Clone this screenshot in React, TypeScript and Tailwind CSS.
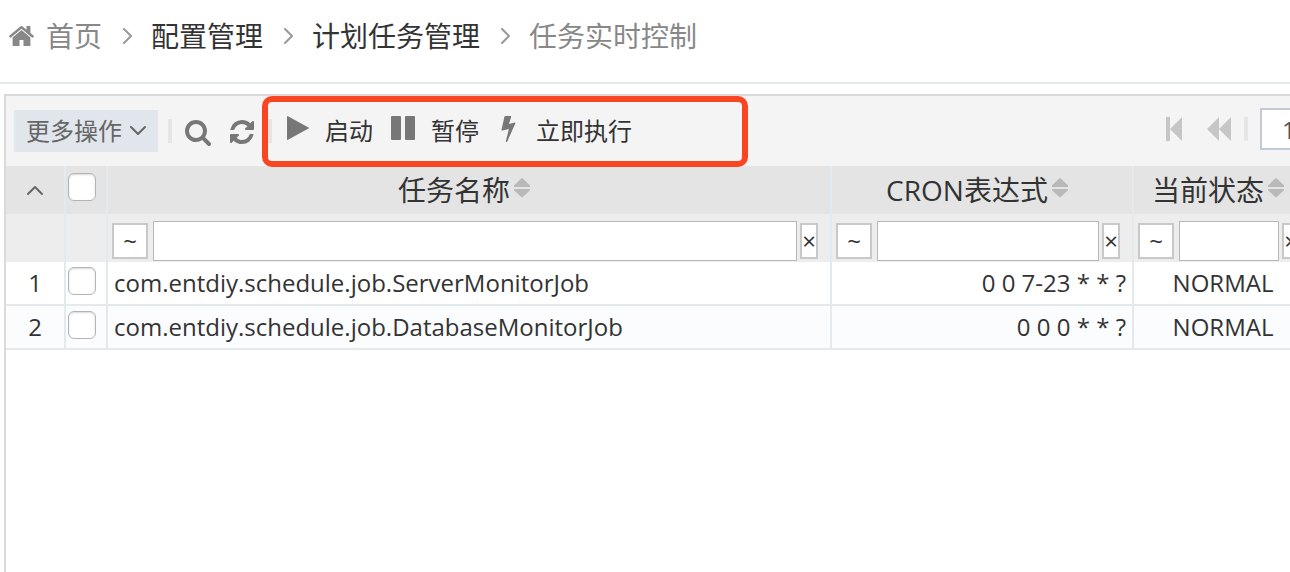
import { Fragment, type ReactNode } from "react";

type IconProps = { className?: string };

const HomeIcon = ({ className }: IconProps) => (
  <svg viewBox="24 253 1616 1283" fill="currentColor" className={className} aria-hidden="true">
    <path d="M1408 992v480q0 26-19 45t-45 19h-384v-384h-256v384h-384q-26 0-45-19t-19-45v-480q0-1 .5-3t.5-3l575-474 575 474q1 2 1 6zm223-69l-62 74q-8 9-21 11h-3q-13 0-21-7l-692-577-692 577q-12 8-24 7-13-2-21-11l-62-74q-8-10-7-23.5t11-21.5l719-599q32-26 76-26t76 26l244 204v-195q0-14 9-23t23-9h192q14 0 23 9t9 23v408l219 182q10 8 11 21.5t-7 23.5z" />
  </svg>
);

const SearchIcon = ({ className }: IconProps) => (
  <svg viewBox="0 128 1664 1664" fill="currentColor" className={className} aria-hidden="true">
    <path d="M1152 832q0-185-131.5-316.5t-316.5-131.5-316.5 131.5-131.5 316.5 131.5 316.5 316.5 131.5 316.5-131.5 131.5-316.5zm512 832q0 52-38 90t-90 38q-54 0-90-38l-343-342q-179 124-399 124-143 0-273.5-55.5t-225-150-150-225-55.5-273.5 55.5-273.5 150-225 225-150 273.5-55.5 273.5 55.5 225 150 150 225 55.5 273.5q0 220-124 399l343 343q37 37 37 90z" />
  </svg>
);

const RefreshIcon = ({ className }: IconProps) => (
  <svg viewBox="0 128 1536 1536" fill="currentColor" className={className} aria-hidden="true">
    <path d="M1511 1056q0 5-1 7-64 268-268 434.5t-478 166.5q-146 0-282.5-55t-243.5-157l-129 129q-19 19-45 19t-45-19-19-45v-448q0-26 19-45t45-19h448q26 0 45 19t19 45-19 45l-137 137q71 66 161 102t187 36q134 0 250-65t186-179q11-17 53-117 8-23 30-23h192q13 0 22.5 9.5t9.5 22.5zm25-800v448q0 26-19 45t-45 19h-448q-26 0-45-19t-19-45 19-45l138-138q-148-137-349-137-134 0-250 65t-186 179q-11 17-53 117-8 23-30 23h-199q-13 0-22.5-9.5t-9.5-22.5v-7q65-268 270-434.5t480-166.5q146 0 284 55.5t245 156.5l130-129q19-19 45-19t45 19 19 45z" />
  </svg>
);

const PlayIcon = ({ className }: IconProps) => (
  <svg viewBox="0 0 22 24" fill="currentColor" className={className} aria-hidden="true">
    <path d="M0 .8Q0-.3 1 .3L21.500 11.500q1 .5 0 1L1 23.700q-1 .6-1-.5z" />
  </svg>
);

const PauseIcon = ({ className }: IconProps) => (
  <svg viewBox="0 0 24 24" fill="currentColor" className={className} aria-hidden="true">
    <rect width="10" height="24" rx="1" />
    <rect x="14" width="10" height="24" rx="1" />
  </svg>
);

const BoltIcon = ({ className }: IconProps) => (
  <svg viewBox="0 0 14 26" fill="currentColor" className={className} aria-hidden="true">
    <path d="M3.600 0h5.600q.8 0 .5.800L7.400 8l5.800-1.400q1-.1.600.9L5.800 25.400q-.4.700-1 .5-.6-.3-.4-.9l3-12.100-6.500 1.600Q-.2 14.600 0 13.700L3 .5Q3.100 0 3.600 0z" />
  </svg>
);

const FirstIcon = ({ className }: IconProps) => (
  <svg viewBox="0 0 16 24" fill="currentColor" className={className} aria-hidden="true">
    <path d="M0 0h4v24H0zM16 0v24L4 12z" />
  </svg>
);

const PrevIcon = ({ className }: IconProps) => (
  <svg viewBox="0 0 24 24" fill="currentColor" className={className} aria-hidden="true">
    <path d="M12 0v24L0 12zM24 0v24L12 12z" />
  </svg>
);

const SortIcon = () => (
  <svg viewBox="0 0 16 20" className="mb-1 h-5 w-4 text-[#b9b9b9]" fill="currentColor" aria-hidden="true">
    <path d="M7.200.6q.8-.8 1.600 0L16 7.500V9H0V7.500zM0 11h16v1.200l-7.200 6.900q-.8.800-1.600 0L0 12.200z" />
  </svg>
);

const Chevron = ({ className, d, box }: { className: string; d: string; box: string }) => (
  <svg viewBox={box} className={className} fill="none" stroke="currentColor" strokeWidth="2" strokeLinecap="round" strokeLinejoin="round" aria-hidden="true">
    <path d={d} />
  </svg>
);

const crumbs = [
  { label: "首页", tone: "text-[#888]", home: true },
  { label: "配置管理", tone: "text-[#333]" },
  { label: "计划任务管理", tone: "text-[#333]" },
  { label: "任务实时控制", tone: "text-[#888]" },
];

const jobs = [
  { id: 1, name: "com.entdiy.schedule.job.ServerMonitorJob", cron: "0 0 7-23 * * ?", status: "NORMAL" },
  { id: 2, name: "com.entdiy.schedule.job.DatabaseMonitorJob", cron: "0 0 0 * * ?", status: "NORMAL" },
];

const columns = ["任务名称", "CRON表达式", "当前状态"];

const Separator = () => <span className="h-6 w-1 shrink-0 bg-[#e5e5e5]" />;

function Checkbox({ label }: { label: string }) {
  return (
    <input
      type="checkbox"
      aria-label={label}
      className="block size-7 appearance-none rounded-md border border-[#b4b4b4] bg-white shadow-[inset_0_1px_2px_rgba(0,0,0,0.15)] checked:bg-[#777]"
    />
  );
}

function ActionButton({ icon, gap, children }: { icon: ReactNode; gap: string; children: ReactNode }) {
  return (
    <button type="button" className={`flex shrink-0 items-center text-[#333] ${gap}`}>
      {icon}
      <span>{children}</span>
    </button>
  );
}

function Breadcrumb() {
  return (
    <nav aria-label="导航" className="border-b-2 border-[#e4e9ee] bg-white">
      <ol className="flex h-[82px] items-center gap-[18px] overflow-hidden pb-2.5 pl-[9px] text-[28px] leading-10 whitespace-nowrap">
        {crumbs.map((c, i) => (
          <Fragment key={c.label}>
            {i > 0 && (
              <li aria-hidden="true" className="text-[#999]">
                <Chevron className="h-4 w-[13px]" box="0 0 13 16" d="M4 1l7 7-7 7" />
              </li>
            )}
            <li>
              <a href="#" className={`flex items-center gap-3 ${c.tone}`}>
                {c.home && <HomeIcon className="h-5 w-[25px]" />}
                {c.label}
              </a>
            </li>
          </Fragment>
        ))}
      </ol>
    </nav>
  );
}

function Toolbar() {
  return (
    <div className="relative flex h-[70px] items-center justify-between bg-[#f4f4f4] pl-2 text-2xl leading-8 whitespace-nowrap">
      <div className="flex items-center">
        <button type="button" className="flex h-[42px] items-center gap-2 bg-[#e1e5ec] px-3 text-[#666]">
          更多操作
          <Chevron className="h-3 w-4" box="0 0 16 12" d="M1 2l7 7 7-7" />
        </button>
        <div className="ml-[10px] flex items-center text-[#777]">
          <Separator />
          <button type="button" aria-label="查询" className="ml-[13px] pt-1">
            <SearchIcon className="size-[26px]" />
          </button>
          <button type="button" aria-label="刷新" className="ml-[19px] pt-0.5">
            <RefreshIcon className="size-6" />
          </button>
        </div>
        <div className="ml-[14px] flex items-center">
          <Separator />
          <div className="ml-[15px] flex items-center gap-[18px]">
            <ActionButton gap="gap-4" icon={<PlayIcon className="mb-1.5 h-6 w-[22px] text-[#777]" />}>启动</ActionButton>
            <ActionButton gap="gap-4" icon={<PauseIcon className="mb-1.5 size-6 text-[#777]" />}>暂停</ActionButton>
            <span className="pl-1">
              <ActionButton gap="gap-5" icon={<BoltIcon className="mb-1 h-[26px] w-[15px] text-[#777]" />}>立即执行</ActionButton>
            </span>
          </div>
        </div>
      </div>
      <div className="flex items-center pb-1 text-[#c6c6c6]">
        <button type="button" aria-label="第一页">
          <FirstIcon className="h-6 w-4" />
        </button>
        <button type="button" aria-label="上一页" className="ml-[25px]">
          <PrevIcon className="size-6" />
        </button>
        <span className="mr-3 ml-[13px] flex">
          <Separator />
        </span>
        <div className="w-[30px] overflow-hidden">
          <input
            aria-label="页码"
            defaultValue="1"
            className="block h-[42px] w-16 rounded-none border-2 border-[#c2cad8] bg-white pl-5 text-2xl text-[#555]"
          />
        </div>
      </div>
      <div className="pointer-events-none absolute top-0 left-64 h-[71px] w-[486px] rounded-[10px] border-6 border-[#fa4522]" />
    </div>
  );
}

function Filter({ label }: { label: string }) {
  return (
    <div className="flex items-center pr-3 pl-1">
      <button type="button" aria-label={`${label} 匹配方式`} className="flex size-9 shrink-0 items-center justify-center border-2 border-[#c8c8c8] bg-white">
        ~
      </button>
      <input aria-label={`${label} 筛选`} className="ml-[5px] h-10 min-w-0 flex-1 rounded-none border border-[#b8b8b8] bg-white px-2" />
      <button
        type="button"
        aria-label={`${label} 清除`}
        className="ml-[3px] flex h-9 w-[18px] shrink-0 items-center justify-center border-2 border-[#c8c8c8] bg-white"
      >
        ×
      </button>
    </div>
  );
}

function JobTable() {
  const cell = "h-11 border-r-2 border-b-2 border-[#e4e9ee] p-0";
  return (
    <table className="w-full min-w-[1308px] table-fixed border-separate border-spacing-0 text-2xl leading-8 text-[#333]">
      <colgroup>
        <col className="w-[60px]" />
        <col className="w-[42px]" />
        <col />
        <col className="w-[302px]" />
        <col className="w-[180px]" />
      </colgroup>
      <thead>
        <tr className="bg-[#e4e4e4]">
          <th className="h-12 border-r-2 border-[#e4e9ee] p-0">
            <button type="button" aria-label="折叠" className="mx-auto block text-[#666]">
              <Chevron className="h-3 w-4" box="0 0 16 12" d="M1 10l7-7 7 7" />
            </button>
          </th>
          <th className="border-r-2 border-[#e4e9ee] p-0 pb-1.5 pl-0.5">
            <Checkbox label="全选" />
          </th>
          {columns.map((c) => (
            <th key={c} className="border-r-2 border-[#e4e9ee] p-0 pr-2.5 font-normal">
              <button type="button" className="mx-auto flex items-center gap-1 text-[28px] leading-10">
                {c}
                <SortIcon />
              </button>
            </th>
          ))}
        </tr>
        <tr className="bg-[#ededed]">
          <td className="h-12 border-r-2 border-[#e4e9ee] p-0" />
          <td className="border-r-2 border-[#e4e9ee] p-0" />
          {columns.map((c) => (
            <td key={c} className="border-r-2 border-[#e4e9ee] p-0 pt-1.5">
              <Filter label={c} />
            </td>
          ))}
        </tr>
      </thead>
      <tbody>
        {jobs.map((j) => (
          <tr key={j.id} className="bg-white even:bg-[#fbfcfe]">
            <td className={`${cell} text-center`}>{j.id}</td>
            <td className={`${cell} pb-1 pl-0.5`}>
              <Checkbox label={`选择 ${j.id}`} />
            </td>
            <td className={`${cell} pl-1.5`}>{j.name}</td>
            <td className={`${cell} pr-1.5 text-right`}>{j.cron}</td>
            <td className={`${cell} text-center`}>{j.status}</td>
          </tr>
        ))}
      </tbody>
    </table>
  );
}

export default function App() {
  return (
    <div className="flex min-h-screen flex-col overflow-hidden bg-white font-['Open_Sans','Noto_Sans_CJK_SC',sans-serif]">
      <Breadcrumb />
      <main className="mt-2.5 ml-1 flex-1 overflow-hidden border-t-2 border-l-2 border-[#dadada]">
        <Toolbar />
        <JobTable />
      </main>
    </div>
  );
}
